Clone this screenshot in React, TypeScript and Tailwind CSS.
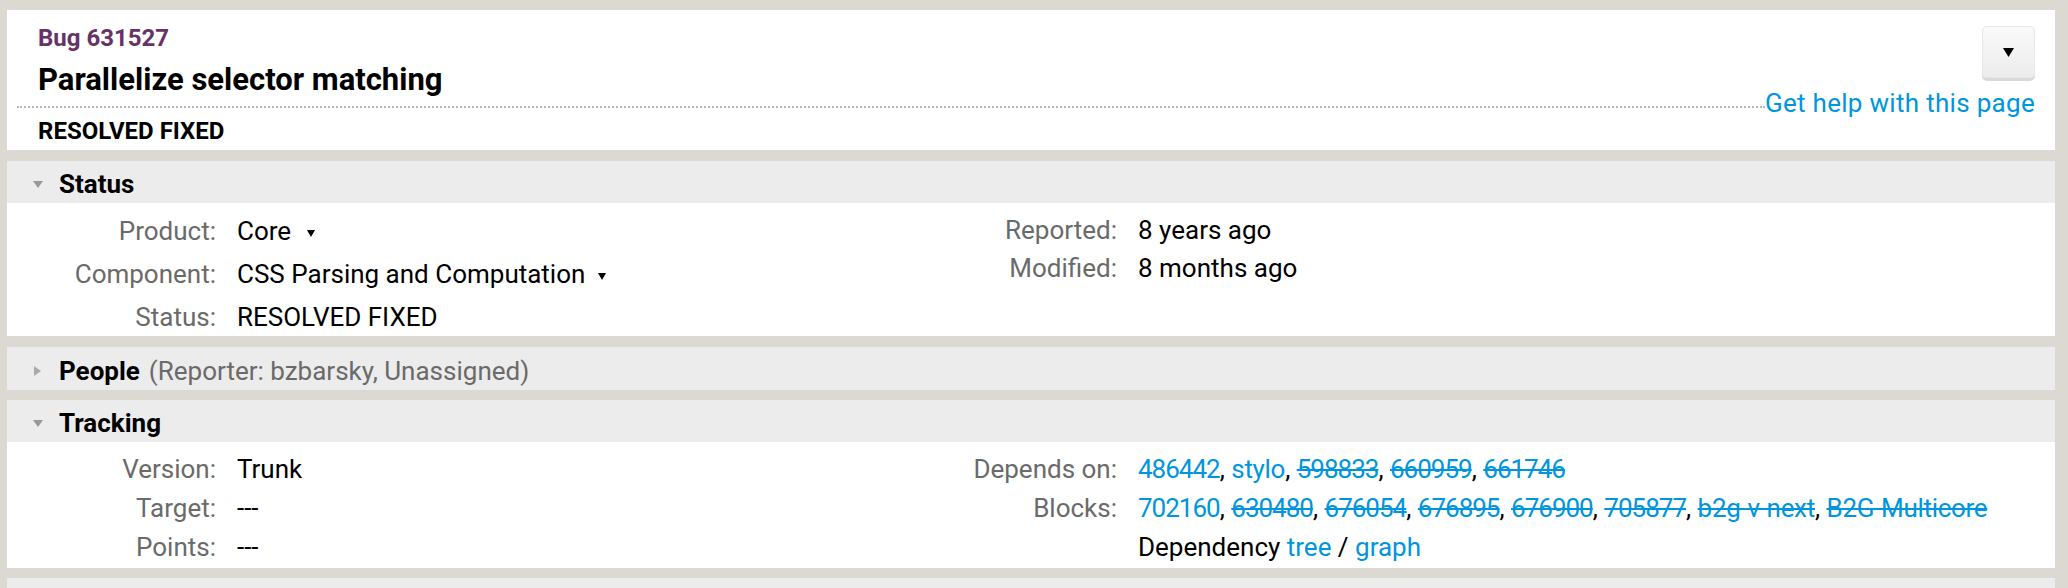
import React from "react";

const LINK = "text-[#0095dd]";

function TriDown({ w = 10, h = 7, color = "#999" }: { w?: number; h?: number; color?: string }) {
  return (
    <svg width={w} height={h} viewBox={`0 0 ${w} ${h}`} className="shrink-0">
      <path d={`M0 0H${w}L${w / 2} ${h}Z`} fill={color} />
    </svg>
  );
}

function TriRight() {
  return (
    <svg width="7" height="10" viewBox="0 0 7 10" className="shrink-0">
      <path d="M0 0L7 5L0 10Z" fill="#aaa" />
    </svg>
  );
}

function SectionHeader({
  title,
  open = true,
  extra,
  h = "h-[42px]",
}: {
  title?: string;
  open?: boolean;
  extra?: string;
  h?: string;
}) {
  return (
    <div className={`${h} bg-[#ececec] flex items-center pt-[4px] pl-[26px]`}>
      {title && (
        <>
          <div className="w-[26px] flex items-center">
            {open ? <TriDown /> : <span className="ml-[1px] flex"><TriRight /></span>}
          </div>
          <span className="text-[26px] leading-[30px] font-bold text-black">{title}</span>
          {extra && <span className="text-[26px] leading-[30px] text-[#6a6a6a] ml-[9px]">{extra}</span>}
        </>
      )}
    </div>
  );
}

function Row({
  label,
  children,
  h,
}: {
  label: string;
  children: React.ReactNode;
  h: string;
}) {
  return (
    <div className={`flex items-center ${h} text-[26px]`}>
      <div className="w-[209px] shrink-0 text-right text-[#6a6a6a]">{label}</div>
      <div className="pl-[21px] flex items-center text-black whitespace-nowrap">{children}</div>
    </div>
  );
}

function Links({ items }: { items: { t: string; s?: boolean; n?: boolean }[] }) {
  return (
    <span>
      {items.map((it, i) => (
        <React.Fragment key={i}>
          <a
            className={`${LINK} ${it.s ? "line-through" : ""} ${
              /^\d+$/.test(it.t) ? "tracking-[-1px]" : "tracking-[-0.3px]"
            }`}
          >
            {it.t}
          </a>
          {i < items.length - 1 && <span className="text-black">, </span>}
        </React.Fragment>
      ))}
    </span>
  );
}

export default function App() {
  return (
    <div className="min-h-[588px] bg-[#dcd9d2] [font-family:Roboto,sans-serif] pt-[10px] pb-[40px]">
      <div className="ml-[7px] w-[2048px] flex flex-col">
        {/* Header card */}
        <div className="bg-white pl-[10px] pr-[20px] h-[140px]">
          <div className="flex">
            <div className="flex-1 h-[98px] border-b-2 border-dotted border-[#b8b8b8] pl-[21px] pt-[13px]">
              <div className="text-[24px] leading-[30px] font-bold text-[#663366]">Bug 631527</div>
              <div className="text-[31px] leading-[53px] font-bold text-black">Parallelize selector matching</div>
            </div>
            <div className="flex flex-col items-end pt-[16px] -mb-[10px]">
              <button className="w-[53px] h-[52px] rounded-[5px] bg-gradient-to-b from-[#fafafa] to-[#ececec] border border-[#e6e6e6] shadow-[0_3px_0_#d9d9d9] flex items-center justify-center">
                <TriDown w={11} h={9} color="#000" />
              </button>
              <a className={`mt-[10px] text-[26px] leading-[30px] tracking-[0.3px] ${LINK} bg-white`}>
                Get help with this page
              </a>
            </div>
          </div>
          <div className="pl-[21px] text-[24px] leading-[46px] font-bold text-black">RESOLVED FIXED</div>
        </div>

        {/* Status */}
        <div className="mt-[11px]">
          <SectionHeader title="Status" />
          <div className="bg-white h-[133px] flex">
            <div className="w-[901px] pt-[7px]">
              <Row label="Product:" h="h-[43px]">
                Core
                <span className="ml-[16px] mt-[4px] flex"><TriDown w={8} h={7} color="#000" /></span>
              </Row>
              <Row label="Component:" h="h-[43px]">
                CSS Parsing and Computation
                <span className="ml-[13px] mt-[4px] flex"><TriDown w={8} h={7} color="#000" /></span>
              </Row>
              <Row label="Status:" h="h-[43px]">RESOLVED FIXED</Row>
            </div>
            <div className="flex-1 pt-[8px]">
              <Row label="Reported:" h="h-[38px]">8 years ago</Row>
              <Row label="Modified:" h="h-[38px]">8 months ago</Row>
            </div>
          </div>
        </div>

        {/* People */}
        <div className="mt-[11px]">
          <SectionHeader title="People" open={false} extra="(Reporter: bzbarsky, Unassigned)" h="h-[43px]" />
        </div>

        {/* Tracking */}
        <div className="mt-[10px]">
          <SectionHeader title="Tracking" />
          <div className="bg-white h-[126px] flex">
            <div className="w-[901px] pt-[8px]">
              <Row label="Version:" h="h-[39px]">Trunk</Row>
              <Row label="Target:" h="h-[39px]">---</Row>
              <Row label="Points:" h="h-[39px]">---</Row>
            </div>
            <div className="flex-1 pt-[8px]">
              <Row label="Depends on:" h="h-[39px]">
                <Links
                  items={[
                    { t: "486442" },
                    { t: "stylo" },
                    { t: "598833", s: true },
                    { t: "660959", s: true },
                    { t: "661746", s: true },
                  ]}
                />
              </Row>
              <Row label="Blocks:" h="h-[39px]">
                <Links
                  items={[
                    { t: "702160" },
                    { t: "630480", s: true },
                    { t: "676054", s: true },
                    { t: "676895", s: true },
                    { t: "676900", s: true },
                    { t: "705877", s: true },
                    { t: "b2g-v-next", s: true },
                    { t: "B2G-Multicore", s: true },
                  ]}
                />
              </Row>
              <Row label="" h="h-[39px]">
                <span>
                  Dependency <a className={LINK}>tree</a> / <a className={LINK}>graph</a>
                </span>
              </Row>
            </div>
          </div>
        </div>

        {/* Next section (cut off at the frame edge) */}
        <div className="mt-[10px]">
          <SectionHeader />
          <div className="bg-white h-[60px]" />
        </div>
      </div>
    </div>
  );
}
